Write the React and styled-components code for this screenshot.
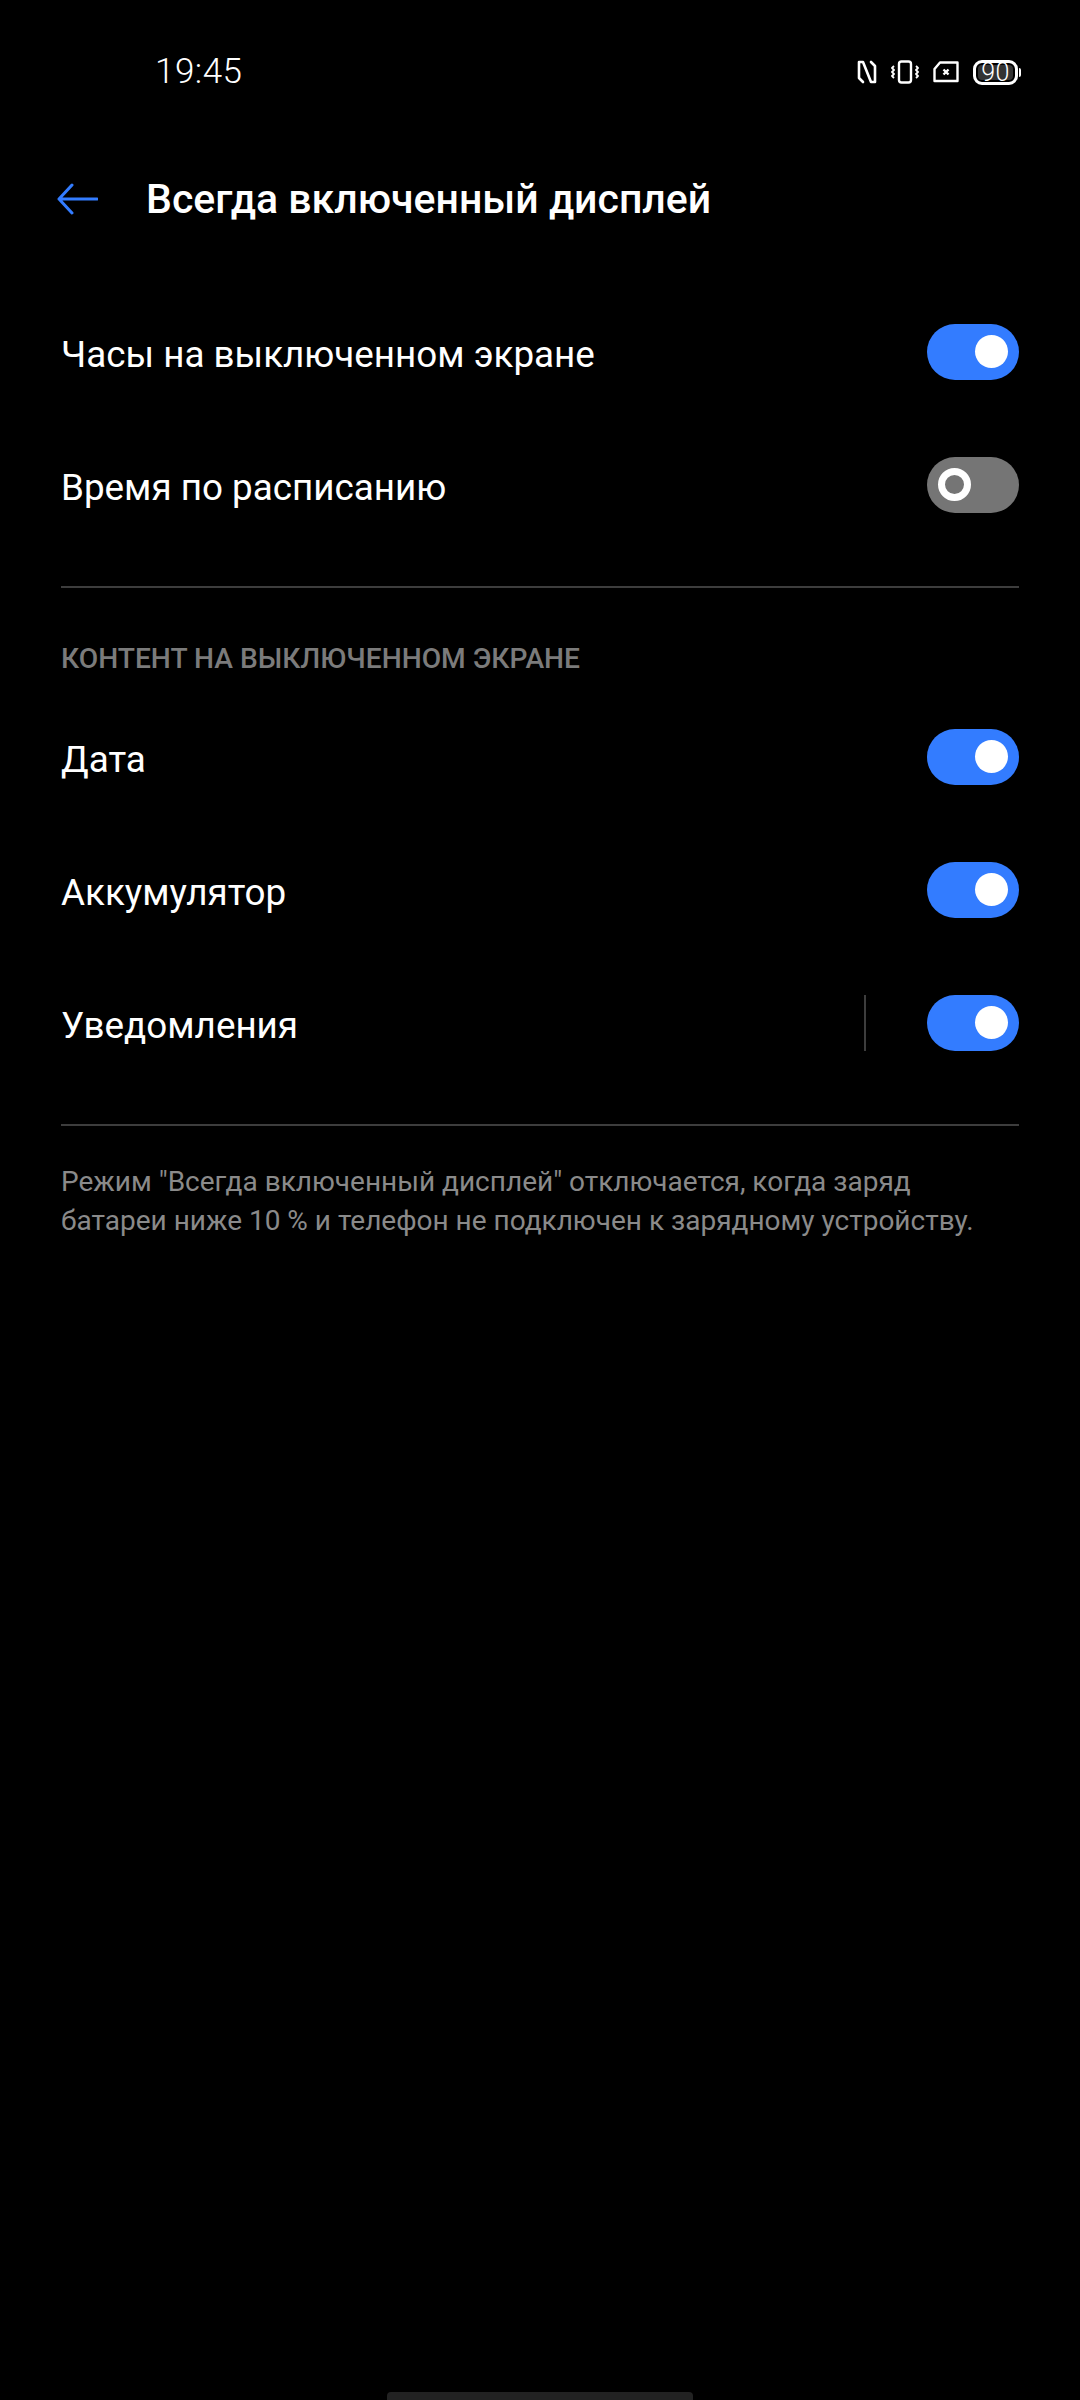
import React from "react";
import styled, { createGlobalStyle } from "styled-components";

const Global = createGlobalStyle`
  html, body { margin: 0; padding: 0; background: #000; }
  body { font-family: Roboto, "Noto Sans", sans-serif; }
`;
const Screen = styled.div`
  width: 1080px; height: 2400px; background: #000; color: #fff;
  display: flex; flex-direction: column; overflow: hidden; position: relative;
`;
const StatusBar = styled.div`
  height: 144px; padding: 0 62px 0 155px; box-sizing: border-box;
  display: flex; justify-content: space-between; align-items: center;
`;
const Time = styled.div`
  font-size: 35px; line-height: 40px; letter-spacing: 0.5px; font-weight: 300;
`;
const StatusIcons = styled.div`
  display: flex; align-items: center; gap: 14px;
`;
const Battery = styled.div`
  position: relative; width: 45px; height: 25px; box-sizing: border-box;
  border: 3px solid #fff; border-radius: 9px; background: #333;
  box-shadow: inset 0 0 0 2px #000;
  display: flex; align-items: center; justify-content: center;
  font-size: 25px; font-weight: 300; letter-spacing: 0.5px;
  &::after {
    content: ""; position: absolute; right: -6px; top: 5px; width: 2px; height: 9px;
    border-radius: 0 2px 2px 0; background: #fff;
  }
`;
const Header = styled.div`
  height: 110px; display: flex; align-items: center; padding-left: 57px;
`;
const Title = styled.h1`
  margin: 0 0 0 48px; font-size: 41px; font-weight: 500; line-height: 110px;
`;
const Rows = styled.div`
  display: flex; flex-direction: column; margin-top: ${p => p.$top}px;
`;
const Row = styled.div`
  height: 133px; display: flex; align-items: center; padding: 0 61px 0 61px;
`;
const RowLabel = styled.div`
  flex: 1; font-size: 36.8px; font-weight: 400; line-height: 133px; padding-top: 3px;
  height: 133px; box-sizing: border-box;
`;
const VLine = styled.div`width: 2px; height: 56px; background: #3d3d3d; margin-right: 61px;`;
const Toggle = styled.div`
  width: 92px; height: 56px; border-radius: 28px; background: ${p => p.$on ? "#337cff" : "#757575"};
  display: flex; align-items: center; box-sizing: border-box; padding: 0 11px;
  justify-content: ${p => p.$on ? "flex-end" : "flex-start"};
`;
const Knob = styled.div`
  width: 33px; height: 33px; border-radius: 50%; box-sizing: border-box;
  background: ${p => p.$on ? "#fff" : "transparent"};
  border: ${p => p.$on ? "0" : "7px solid #fff"};
`;
const Divider = styled.div`
  height: 2px; background: #3d3d3d; margin: ${p => p.$top}px 61px 0 61px;
`;
const SectionTitle = styled.div`
  font-size: 28.2px; font-weight: 500; color: #7b7b7b; padding: 0 61px; line-height: 32px; margin-top: 55px;
`;
const Note = styled.div`
  font-size: 28px; color: #8a8a8a; line-height: 39px; padding: 0 40px 0 61px; margin-top: 36px;
`;
const NavPill = styled.div`
  position: absolute; left: 387px; bottom: 0; width: 306px; height: 8px;
  border-radius: 4px 4px 0 0; background: #222;
`;

const Switch = ({ on }) => <Toggle $on={on}><Knob $on={on} /></Toggle>;

const BackArrow = () => (
  <svg width="41" height="32" viewBox="0 0 41 32" fill="none" stroke="#337cff" strokeWidth="3" strokeLinecap="round" strokeLinejoin="round">
    <path d="M2 16H40M15 2L2 16L15 30" />
  </svg>
);

const NfcIcon = () => (
  <svg width="20" height="24" viewBox="0 0 20 24" fill="none" stroke="#fff" strokeWidth="2.6" strokeLinejoin="round" strokeLinecap="round">
    <path d="M6 22L2 18V2H6L14 22H18V6L14 2" />
  </svg>
);
const VibrateIcon = () => (
  <svg width="28" height="24" viewBox="0 0 28 24" fill="none" stroke="#fff" strokeWidth="2.4" strokeLinejoin="round">
    <rect x="8" y="1.5" width="12" height="21" rx="2.5" />
    <path d="M3 6l-2 2 2 2-2 2 2 2-2 2 2 2M25 6l2 2-2 2 2 2-2 2 2 2-2 2" strokeWidth="1.8" />
  </svg>
);
const SimIcon = () => (
  <svg width="26" height="22" viewBox="0 0 26 22" fill="none" stroke="#fff" strokeWidth="2.4" strokeLinejoin="round">
    <path d="M1.5 8L7 1.5H24.5V20H1.5Z" />
    <path d="M10.5 8.5l5 5M15.5 8.5l-5 5" />
  </svg>
);

export default function App() {
  return (
    <Screen>
      <Global />
      <StatusBar>
        <Time>19:45</Time>
        <StatusIcons>
          <NfcIcon />
          <VibrateIcon />
          <SimIcon />
          <Battery>90</Battery>
        </StatusIcons>
      </StatusBar>
      <Header>
        <BackArrow />
        <Title>Всегда включенный дисплей</Title>
      </Header>
      <Rows $top={31}>
        <Row><RowLabel>Часы на выключенном экране</RowLabel><Switch on /></Row>
        <Row><RowLabel>Время по расписанию</RowLabel><Switch /></Row>
      </Rows>
      <Divider $top={35} />
      <SectionTitle>КОНТЕНТ НА ВЫКЛЮЧЕННОМ ЭКРАНЕ</SectionTitle>
      <Rows $top={15}>
        <Row><RowLabel>Дата</RowLabel><Switch on /></Row>
        <Row><RowLabel>Аккумулятор</RowLabel><Switch on /></Row>
        <Row><RowLabel>Уведомления</RowLabel><VLine /><Switch on /></Row>
      </Rows>
      <Divider $top={35} />
      <Note>
        Режим "Всегда включенный дисплей" отключается, когда заряд<br />
        батареи ниже 10 % и телефон не подключен к зарядному устройству.
      </Note>
      <NavPill />
    </Screen>
  );
}
